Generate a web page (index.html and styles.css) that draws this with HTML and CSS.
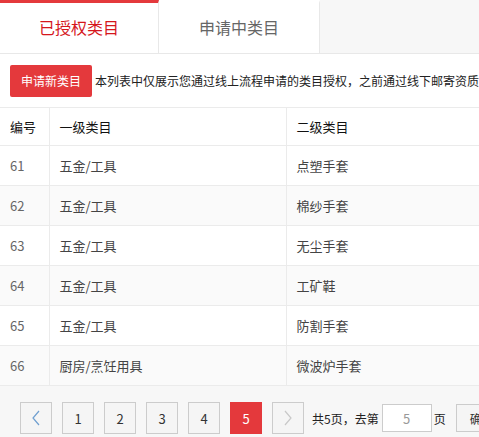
FILE: index.html
```html
<!DOCTYPE html>
<html lang="zh-CN">
<head>
<meta charset="utf-8">
<title>类目管理</title>
<link rel="stylesheet" href="styles.css">
</head>
<body>
<div class="page">
  <div class="tabs">
    <div class="tab active">已授权类目</div>
    <div class="tab">申请中类目</div>
  </div>
  <div class="toolbar">
    <button class="btn-primary">申请新类目</button>
    <span class="notice">本列表中仅展示您通过线上流程申请的类目授权，之前通过线下邮寄资质申请的类目授权请联系您的招商经理查询。</span>
  </div>
  <table class="grid">
    <colgroup>
      <col class="c1"><col class="c2"><col class="c3">
    </colgroup>
    <thead>
      <tr><th>编号</th><th>一级类目</th><th>二级类目</th></tr>
    </thead>
    <tbody>
      <tr><td class="num">61</td><td>五金/工具</td><td>点塑手套</td></tr>
      <tr class="alt"><td class="num">62</td><td>五金/工具</td><td>棉纱手套</td></tr>
      <tr><td class="num">63</td><td>五金/工具</td><td>无尘手套</td></tr>
      <tr class="alt"><td class="num">64</td><td>五金/工具</td><td>工矿鞋</td></tr>
      <tr><td class="num">65</td><td>五金/工具</td><td>防割手套</td></tr>
      <tr class="alt"><td class="num">66</td><td>厨房/烹饪用具</td><td>微波炉手套</td></tr>
    </tbody>
  </table>
  <div class="pager">
    <span class="pg prev"><svg width="10" height="16" viewBox="0 0 10 16"><polyline points="8,1 2,8 8,15" fill="none" stroke="#6f9fd0" stroke-width="1.2"/></svg></span>
    <span class="pg">1</span>
    <span class="pg">2</span>
    <span class="pg">3</span>
    <span class="pg">4</span>
    <span class="pg current">5</span>
    <span class="pg next"><svg width="10" height="16" viewBox="0 0 10 16"><polyline points="2,1 8,8 2,15" fill="none" stroke="#c8c8c8" stroke-width="1.2"/></svg></span>
    <span class="pg-text">共5页，去第</span>
    <input class="pg-input" type="text" value="5">
    <span class="pg-text">页</span>
    <button class="pg-go">确定</button>
  </div>
</div>
</body>
</html>
```
FILE: styles.css
```css
html, body {
  margin: 0;
  padding: 0;
  overflow: hidden;
  background: #fff;
}
.page {
  width: 800px;
  font-family: "Noto Sans CJK SC", "Microsoft YaHei", sans-serif;
  color: #333;
}
.tabs {
  display: flex;
  height: 53px;
  background: #f7f7f7;
  border-bottom: 1px solid #e8e8e8;
}
.tab {
  box-sizing: border-box;
  height: 53px;
  border-top: 3px solid transparent;
  border-right: 1px solid #e8e8e8;
  background: #fff;
  display: flex;
  align-items: center;
  justify-content: center;
  font-size: 16px;
  font-weight: normal;
  color: #666;
  width: 159px;
  padding-bottom: 2px;
}
.tab.active {
  border-top-color: #e4393c;
  color: #d5161c;
}
.tab + .tab {
  width: 161px;
}
.toolbar {
  display: flex;
  align-items: center;
  height: 53px;
  padding-left: 10px;
  white-space: nowrap;
}
.btn-primary {
  height: 32px;
  width: 82px;
  padding: 0;
  border: none;
  border-radius: 2px;
  background: #e4393c;
  color: #fff;
  font-family: inherit;
  font-size: 12px;
  margin-right: 3px;
}
.notice {
  font-size: 12px;
  color: #222;
}
.grid {
  width: 100%;
  border-collapse: collapse;
  table-layout: fixed;
  font-size: 13px;
}
.grid col.c1 { width: 49px; }
.grid col.c2 { width: 237px; }
.grid th, .grid td {
  text-align: left;
  padding: 0 10px;
  border-top: 1px solid #ebebeb;
  border-bottom: 1px solid #ebebeb;
  border-left: 1px solid #ebebeb;
  white-space: nowrap;
}
.grid th:first-child, .grid td:first-child {
  border-left: none;
}
.grid th {
  height: 37px;
  font-weight: normal;
  color: #111;
}
.grid td {
  height: 39px;
  color: #444;
}
.grid td.num {
  color: #666;
}
.grid tr.alt td {
  background: #fafafa;
}
.pager {
  background: #f7f7f7;
  display: flex;
  align-items: center;
  padding: 16px 0 30px 20px;
  font-size: 13px;
}
.pg {
  width: 32px;
  height: 32px;
  box-sizing: border-box;
  border: 1px solid #cccccc;
  background: #f5f5f5;
  display: flex;
  align-items: center;
  justify-content: center;
  margin-right: 10px;
  color: #333;
}
.pg.current {
  background: #e4393c;
  border-color: #e4393c;
  color: #fff;
}
.pg.next {
  margin-right: 8px;
}
.pg-text {
  font-size: 12px;
  color: #222;
}
.pg-input {
  width: 50px;
  height: 28px;
  box-sizing: border-box;
  border: 1px solid #cccccc;
  background: #fff;
  text-align: center;
  color: #999;
  font-family: inherit;
  font-size: 13px;
  margin: 0 2px 0 3px;
  padding: 0;
}
.pg-go {
  margin-left: 10px;
  height: 28px;
  width: 52px;
  box-sizing: border-box;
  border: 1px solid #cccccc;
  background: #f5f5f5;
  font-family: inherit;
  font-size: 12px;
  color: #333;
  padding: 0;
}
```
